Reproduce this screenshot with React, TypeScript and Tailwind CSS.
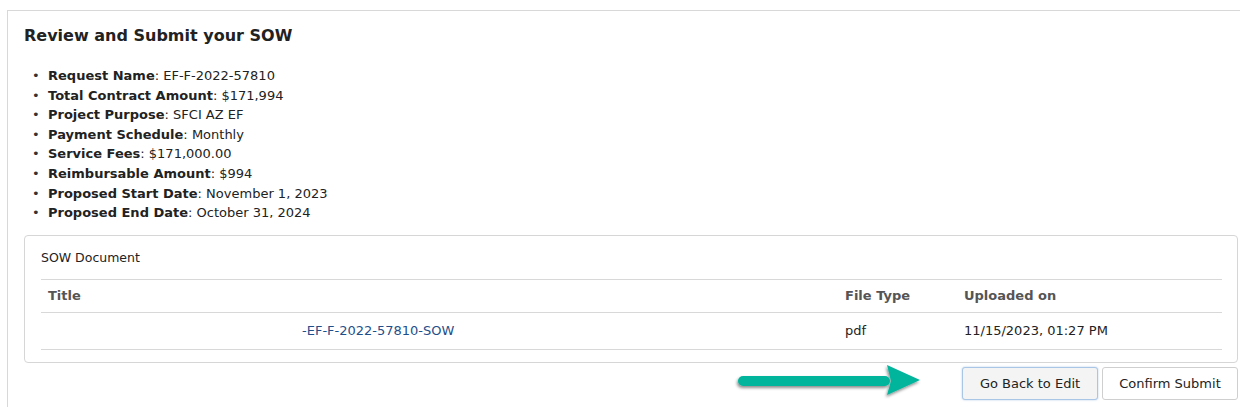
import React from "react";

const items: [string, string][] = [
  ["Request Name", "EF-F-2022-57810"],
  ["Total Contract Amount", "$171,994"],
  ["Project Purpose", "SFCI AZ EF"],
  ["Payment Schedule", "Monthly"],
  ["Service Fees", "$171,000.00"],
  ["Reimbursable Amount", "$994"],
  ["Proposed Start Date", "November 1, 2023"],
  ["Proposed End Date", "October 31, 2024"],
];

function Arrow() {
  return (
    <svg width="190" height="34" viewBox="0 0 190 34" className="block">
      <defs>
        <filter id="sh" x="-10%" y="-50%" width="120%" height="200%">
          <feDropShadow dx="-1" dy="2" stdDeviation="1.5" floodColor="#000" floodOpacity="0.45" />
        </filter>
      </defs>
      <g filter="url(#sh)">
        <rect x="6" y="11" width="152" height="10" rx="5" fill="#00b59c" />
        <polygon points="155,0 188,15 155,30 159,16" fill="#00b59c" />
      </g>
    </svg>
  );
}

export default function App() {
  return (
    <div
      className="w-[1240px] h-[407px] bg-white pt-[10px] pl-[7px] overflow-hidden text-[#222]"
      style={{ fontFamily: '"DejaVu Sans", Verdana, sans-serif' }}
    >
      <div className="border-t border-l border-[#d8d8d8] pl-[16px] pr-[2px] h-[400px]">
        <h2 className="text-[16px] font-bold leading-[22px] pt-[14px] text-[#222]">
          Review and Submit your SOW
        </h2>
        <ul className="mt-[19px] pl-[8px] text-[13px] leading-[19.6px]">
          {items.map(([k, v]) => (
            <li key={k} className="flex items-center">
              <span className="w-[16px] text-[#333] text-[13px]">•</span>
              <span>
                <b>{k}</b>: {v}
              </span>
            </li>
          ))}
        </ul>
        <div className="mt-[12px] border border-[#d6d6d6] rounded-[4px] pl-[16px] pr-[15px] pt-[12px] pb-[12px] text-[13px]">
          <div className="text-[12.5px] leading-[20px] pb-[11px] border-b border-[#d8d8d8] text-[#222]">
            SOW Document
          </div>
          <div className="flex h-[33px] items-center border-b border-[#d8d8d8] font-bold text-[#555]">
            <div className="w-[797px] pl-[7px]">Title</div>
            <div className="w-[119px] pl-[7px]">File Type</div>
            <div className="flex-1 pl-[7px]">Uploaded on</div>
          </div>
          <div className="flex h-[37px] items-center border-b border-[#d8d8d8] text-[#222]">
            <div className="w-[797px] pl-[261px] text-[#1f4f8a]">-EF-F-2022-57810-SOW</div>
            <div className="w-[119px] pl-[7px]">pdf</div>
            <div className="flex-1 pl-[7px]">11/15/2023, 01:27 PM</div>
          </div>
        </div>
        <div className="flex justify-end items-center mt-[4px] text-[13px]">
          <div className="mr-[40px] mt-[-2px]">
            <Arrow />
          </div>
          <button className="h-[33px] w-[136px] rounded-[3px] border border-[#a9c6e6] bg-[#f4f4f4] text-[#222] shadow-[0_0_2px_rgba(100,150,210,0.5)]">
            Go Back to Edit
          </button>
          <button className="ml-[4px] h-[33px] w-[136px] rounded-[3px] border border-[#cfcfcf] bg-white text-[#222]">
            Confirm Submit
          </button>
        </div>
      </div>
    </div>
  );
}
